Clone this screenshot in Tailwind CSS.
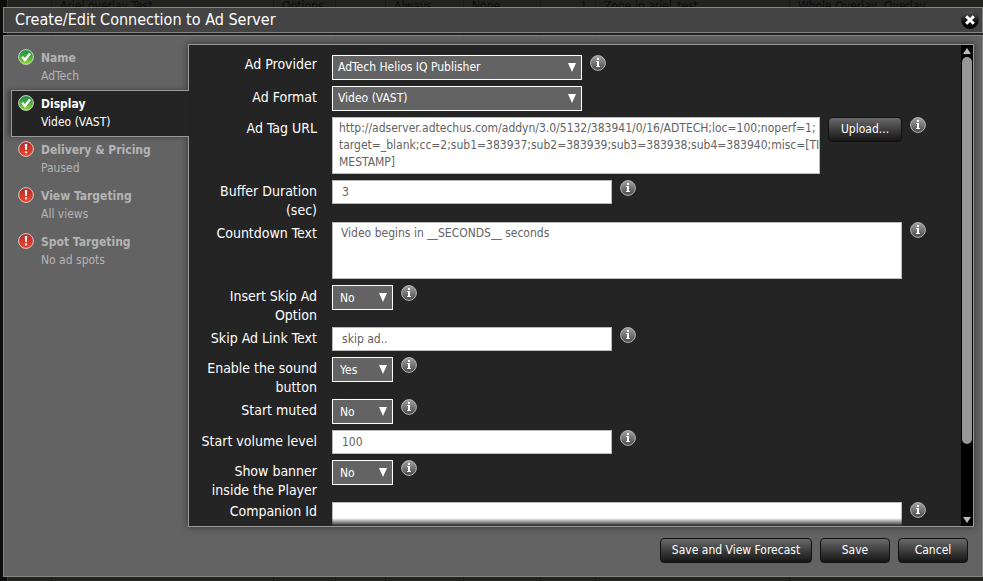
<!DOCTYPE html>
<html lang="en">
<head>
<meta charset="utf-8">
<title>Create/Edit Connection to Ad Server</title>
<script src="https://cdn.jsdelivr.net/npm/@tailwindcss/browser@4"></script>
</head>
<body class="bg-[#111] font-['DejaVu_Sans_Condensed','DejaVu_Sans',sans-serif] text-white">
<svg class="absolute size-0" aria-hidden="true">
  <defs>
    <linearGradient id="gi" x1="0" y1="0" x2="0" y2="1"><stop offset="0" stop-color="#a2a2a2"/><stop offset="1" stop-color="#484848"/></linearGradient>
    <linearGradient id="gg" x1="0" y1="0" x2="0" y2="1"><stop offset="0" stop-color="#1d8a48"/><stop offset=".5" stop-color="#45ad3c"/><stop offset="1" stop-color="#a0d63c"/></linearGradient>
    <linearGradient id="gr" x1="0" y1="0" x2="0" y2="1"><stop offset="0" stop-color="#b5262b"/><stop offset="1" stop-color="#ec4a2c"/></linearGradient>
    <linearGradient id="gx" x1="0" y1="0" x2="0" y2="1"><stop offset="0" stop-color="#555"/><stop offset=".6" stop-color="#111"/><stop offset="1" stop-color="#000"/></linearGradient>
    <symbol id="info" viewBox="0 0 16 16"><circle cx="8" cy="8" r="7.4" fill="url(#gi)" stroke="#b4b4b4"/><path d="M7 3h2v2H7zM6 6h3v6H7V7H6z" fill="#fff"/><path d="M6 11h4v1H6z" fill="#fff"/></symbol>
    <symbol id="ok" viewBox="0 0 16 16"><circle cx="8" cy="8" r="7.4" fill="url(#gg)" stroke="#c5d8c3"/><path d="M4.2 7.8 7 11l5-6.6" fill="none" stroke="#fff" stroke-width="2.4"/></symbol>
    <symbol id="warn" viewBox="0 0 16 16"><circle cx="8" cy="8" r="7.4" fill="url(#gr)" stroke="#dcc6c4"/><path d="M6.8 3h2.4l-.4 6H7.2zM7 10.3h2v2H7z" fill="#fff"/></symbol>
    <symbol id="down" viewBox="0 0 8 9" preserveAspectRatio="none"><path d="M0 0h8L4 9z" fill="#fff"/></symbol>
  </defs>
</svg>

<div class="absolute inset-0 grid grid-cols-[8px_44px_222px_62px_50px_78px_77px_55px_194px_1fr] overflow-hidden bg-[#22221f] text-[12px] leading-3 text-[#0c0c0a]" aria-hidden="true">
  <span class="border-r border-[#3c3b10] bg-[#0d0d0d]"></span>
  <span class="border-r border-[#1a1a18]"></span>
  <span class="border-r border-[#1a1a18] pl-2">Ariel overlay Test</span>
  <span class="border-r border-[#1a1a18] pl-2">Options</span>
  <span class="border-r border-[#1a1a18]"></span>
  <span class="border-r border-[#1a1a18] pl-2">Always</span>
  <span class="border-r border-[#1a1a18] pl-2">None</span>
  <span class="border-r border-[#1a1a18] pr-2 text-right">1</span>
  <span class="border-r border-[#1a1a18] pl-2">Zone in ariel_test</span>
  <span class="pl-2">Whole Overlay, Overlay</span>
</div>

<main class="relative flex h-screen flex-col gap-0.5 pt-[7px] pb-1 pl-[3px]">
  <header class="flex h-[26px] shrink-0 items-center justify-between border border-[#858585] bg-[#444] pr-[3px] pl-[11px]">
    <h1 class="text-[16px] leading-6">Create/Edit Connection to Ad Server</h1>
    <button type="button" aria-label="Close" class="size-[18px]">
      <svg viewBox="0 0 18 18" class="size-[18px]"><circle cx="9" cy="9" r="9" fill="url(#gx)"/><path d="M5.2 5.2l7.6 7.6M12.8 5.2l-7.6 7.6" stroke="#fff" stroke-width="3"/></svg>
    </button>
  </header>

  <section class="flex min-h-0 flex-1 flex-col border border-[#858585] bg-[#636363]">
    <div class="flex min-h-0 flex-1 pt-2 pr-2 pl-[7px]">
      <nav class="relative z-10 w-[178px] shrink-0 text-[12px] leading-[18px] text-[#b4b4b4]">
        <button type="button" class="flex h-[46px] w-full items-start gap-[7px] px-[7px] pt-[5px] text-left">
          <svg class="size-4"><use href="#ok"/></svg>
          <span class="flex flex-col"><b>Name</b><span>AdTech</span></span>
        </button>
        <button type="button" class="flex h-[47px] w-full items-start gap-[7px] border border-r-0 border-[#9a9a9a] bg-[#242424] px-[6px] pt-[4px] text-left text-white shadow-[-3px_0_5px_rgba(0,0,0,0.35)]">
          <svg class="size-4"><use href="#ok"/></svg>
          <span class="flex flex-col"><b>Display</b><span>Video (VAST)</span></span>
        </button>
        <button type="button" class="flex h-[46px] w-full items-start gap-[7px] px-[7px] pt-[4px] text-left">
          <svg class="size-4"><use href="#warn"/></svg>
          <span class="flex flex-col"><b>Delivery &amp; Pricing</b><span>Paused</span></span>
        </button>
        <button type="button" class="flex h-[46px] w-full items-start gap-[7px] px-[7px] pt-[4px] text-left">
          <svg class="size-4"><use href="#warn"/></svg>
          <span class="flex flex-col"><b>View Targeting</b><span>All views</span></span>
        </button>
        <button type="button" class="flex h-[46px] w-full items-start gap-[7px] px-[7px] pt-[4px] text-left">
          <svg class="size-4"><use href="#warn"/></svg>
          <span class="flex flex-col"><b>Spot Targeting</b><span>No ad spots</span></span>
        </button>
      </nav>

      <div class="relative -ml-px flex min-w-0 flex-1 border border-[#9a9a9a] bg-[#242424] shadow-[0_0_7px_rgba(0,0,0,0.5)]">
        <form id="ad-form" class="min-w-0 flex-1 overflow-y-auto pt-[10px] pr-[35px] text-[12px] [scrollbar-width:none]">
          <div class="flex items-start">
            <label for="provider" class="mr-[15px] w-32 shrink-0 pl-3 text-right text-[14px] leading-[19px]">Ad Provider</label>
            <div class="flex flex-1 gap-2 pb-1.5">
              <div class="relative">
                <select id="provider" class="block h-[25px] w-[250px] appearance-none border border-white bg-[#636363] px-[5px] pb-0.5"><option>AdTech Helios IQ Publisher</option></select>
                <svg class="pointer-events-none absolute top-2 right-1.5 h-[9px] w-2"><use href="#down"/></svg>
              </div>
              <svg class="size-4"><use href="#info"/></svg>
            </div>
          </div>
          <div class="flex items-start">
            <label for="format" class="mr-[15px] w-32 shrink-0 pt-0.5 pl-3 text-right text-[14px] leading-[19px]">Ad Format</label>
            <div class="relative mb-1.5">
              <select id="format" class="block h-[25px] w-[250px] appearance-none border border-white bg-[#636363] px-[5px] pb-0.5"><option>Video (VAST)</option></select>
              <svg class="pointer-events-none absolute top-2 right-1.5 h-[9px] w-2"><use href="#down"/></svg>
            </div>
          </div>
          <div class="flex items-start">
            <label for="tag" class="mr-[15px] w-32 shrink-0 pt-0.5 pl-3 text-right text-[14px] leading-[19px]">Ad Tag URL</label>
            <div class="flex min-w-0 flex-1 items-start gap-2 pb-1.5">
              <textarea id="tag" class="block h-[57px] min-w-0 flex-1 resize-none overflow-hidden border border-[#bbb] bg-white pt-0.5 pl-1.5 leading-[17px] whitespace-pre text-[#636363]">http://adserver.adtechus.com/addyn/3.0/5132/383941/0/16/ADTECH;loc=100;noperf=1;
target=_blank;cc=2;sub1=383937;sub2=383939;sub3=383938;sub4=383940;misc=[TI
MESTAMP]</textarea>
              <button type="button" class="h-[25px] w-[74px] rounded-[4px] border border-[#111] bg-linear-to-b from-[#6a6a6a] to-[#161616] pb-0.5">Upload...</button>
              <svg class="size-4"><use href="#info"/></svg>
            </div>
          </div>
          <div class="flex items-start">
            <label for="buffer" class="mr-[15px] w-32 shrink-0 py-0.5 pl-3 text-right text-[14px] leading-[19px]">Buffer Duration (sec)</label>
            <div class="flex flex-1 gap-2 pb-1.5">
              <input id="buffer" type="text" value="3" class="h-6 w-[280px] border border-[#bbb] bg-white px-[9px] text-[#636363]">
              <svg class="size-4"><use href="#info"/></svg>
            </div>
          </div>
          <div class="flex items-start">
            <label for="countdown" class="mr-[15px] w-32 shrink-0 pt-0.5 pl-3 text-right text-[14px] leading-[19px]">Countdown Text</label>
            <div class="flex min-w-0 flex-1 gap-2 pb-1.5">
              <textarea id="countdown" class="block h-[57px] min-w-0 flex-1 resize-none overflow-hidden border border-[#bbb] bg-white pt-0.5 pl-2 leading-[17px] text-[#636363]">Video begins in __SECONDS__ seconds</textarea>
              <svg class="size-4"><use href="#info"/></svg>
            </div>
          </div>
          <div class="flex items-start">
            <label for="skip" class="mr-[15px] w-32 shrink-0 py-0.5 pl-3 text-right text-[14px] leading-[19px]">Insert Skip Ad Option</label>
            <div class="flex flex-1 gap-2 pb-1.5">
              <div class="relative">
                <select id="skip" class="block h-[25px] w-[61px] appearance-none border border-white bg-[#636363] px-[7px]"><option>No</option><option>Yes</option></select>
                <svg class="pointer-events-none absolute top-2 right-1.5 h-[9px] w-2"><use href="#down"/></svg>
              </div>
              <svg class="size-4"><use href="#info"/></svg>
            </div>
          </div>
          <div class="flex items-start">
            <label for="skiptext" class="mr-[15px] w-32 shrink-0 pt-0.5 pl-3 text-right text-[14px] leading-[19px]">Skip Ad Link Text</label>
            <div class="flex flex-1 gap-2 pb-1.5">
              <input id="skiptext" type="text" value="skip ad.." class="h-6 w-[280px] border border-[#bbb] bg-white px-[9px] text-[#636363]">
              <svg class="size-4"><use href="#info"/></svg>
            </div>
          </div>
          <div class="flex items-start">
            <label for="sound" class="mr-[15px] w-32 shrink-0 py-0.5 pl-3 text-right text-[14px] leading-[19px]">Enable the sound button</label>
            <div class="flex flex-1 gap-2 pb-1.5">
              <div class="relative">
                <select id="sound" class="block h-[25px] w-[61px] appearance-none border border-white bg-[#636363] px-[7px]"><option>Yes</option><option>No</option></select>
                <svg class="pointer-events-none absolute top-2 right-1.5 h-[9px] w-2"><use href="#down"/></svg>
              </div>
              <svg class="size-4"><use href="#info"/></svg>
            </div>
          </div>
          <div class="flex items-start">
            <label for="muted" class="mr-[15px] w-32 shrink-0 pt-0.5 pl-3 text-right text-[14px] leading-[19px]">Start muted</label>
            <div class="flex flex-1 gap-2 pb-1.5">
              <div class="relative">
                <select id="muted" class="block h-[25px] w-[61px] appearance-none border border-white bg-[#636363] px-[7px]"><option>No</option><option>Yes</option></select>
                <svg class="pointer-events-none absolute top-2 right-1.5 h-[9px] w-2"><use href="#down"/></svg>
              </div>
              <svg class="size-4"><use href="#info"/></svg>
            </div>
          </div>
          <div class="flex items-start">
            <label for="volume" class="mr-[15px] w-32 shrink-0 pt-0.5 text-right text-[14px] leading-[19px]">Start volume level</label>
            <div class="flex flex-1 gap-2 pb-1.5">
              <input id="volume" type="text" value="100" class="h-6 w-[280px] border border-[#bbb] bg-white px-[9px] text-[#636363]">
              <svg class="size-4"><use href="#info"/></svg>
            </div>
          </div>
          <div class="flex items-start">
            <label for="banner" class="mr-[15px] w-32 shrink-0 py-0.5 pl-3 text-right text-[14px] leading-[19px]">Show banner inside the Player</label>
            <div class="flex flex-1 gap-2 pb-1.5">
              <div class="relative">
                <select id="banner" class="block h-[25px] w-[61px] appearance-none border border-white bg-[#636363] px-[7px]"><option>No</option><option>Yes</option></select>
                <svg class="pointer-events-none absolute top-2 right-1.5 h-[9px] w-2"><use href="#down"/></svg>
              </div>
              <svg class="size-4"><use href="#info"/></svg>
            </div>
          </div>
          <div class="flex items-start">
            <label for="companion" class="mr-[15px] w-32 shrink-0 pl-3 text-right text-[14px] leading-[19px]">Companion Id</label>
            <div class="flex min-w-0 flex-1 gap-2 pb-1.5">
              <textarea id="companion" class="block h-[57px] min-w-0 flex-1 resize-none border border-[#bbb] bg-white pt-0.5 pl-2 leading-[17px] text-[#636363]"></textarea>
              <svg class="size-4"><use href="#info"/></svg>
            </div>
          </div>
        </form>
        <div class="pointer-events-none absolute right-3 bottom-0 left-0 h-2 bg-linear-to-b from-[#242424]/0 to-[#242424]"></div>
        <div class="flex w-3 shrink-0 flex-col items-center bg-black">
          <button type="button" aria-label="Scroll up" class="flex h-3 w-full items-center justify-center"><svg viewBox="0 0 8 6" class="h-1.5 w-2"><path d="M4 0l4 6H0z" fill="#bbb"/></svg></button>
          <div class="h-[387px] min-h-0 w-2.5 rounded-full bg-[#979797]"></div>
          <button type="button" aria-label="Scroll down" class="mt-auto flex h-3 w-full items-center justify-center"><svg viewBox="0 0 8 6" class="h-1.5 w-2"><path d="M0 0h8L4 6z" fill="#bbb"/></svg></button>
        </div>
      </div>
    </div>

    <footer class="flex shrink-0 justify-end gap-2 pt-[11px] pr-[14px] pb-[13px] text-[12px]">
      <button type="button" class="h-[25px] w-[152px] rounded-[4px] border border-[#111] bg-linear-to-b from-[#6a6a6a] to-[#161616] pb-0.5">Save and View Forecast</button>
      <button type="submit" form="ad-form" class="h-[25px] w-[70px] rounded-[4px] border border-[#111] bg-linear-to-b from-[#6a6a6a] to-[#161616] pb-0.5">Save</button>
      <button type="button" class="h-[25px] w-[70px] rounded-[4px] border border-[#111] bg-linear-to-b from-[#6a6a6a] to-[#161616] pb-0.5">Cancel</button>
    </footer>
  </section>
</main>
</body>
</html>
